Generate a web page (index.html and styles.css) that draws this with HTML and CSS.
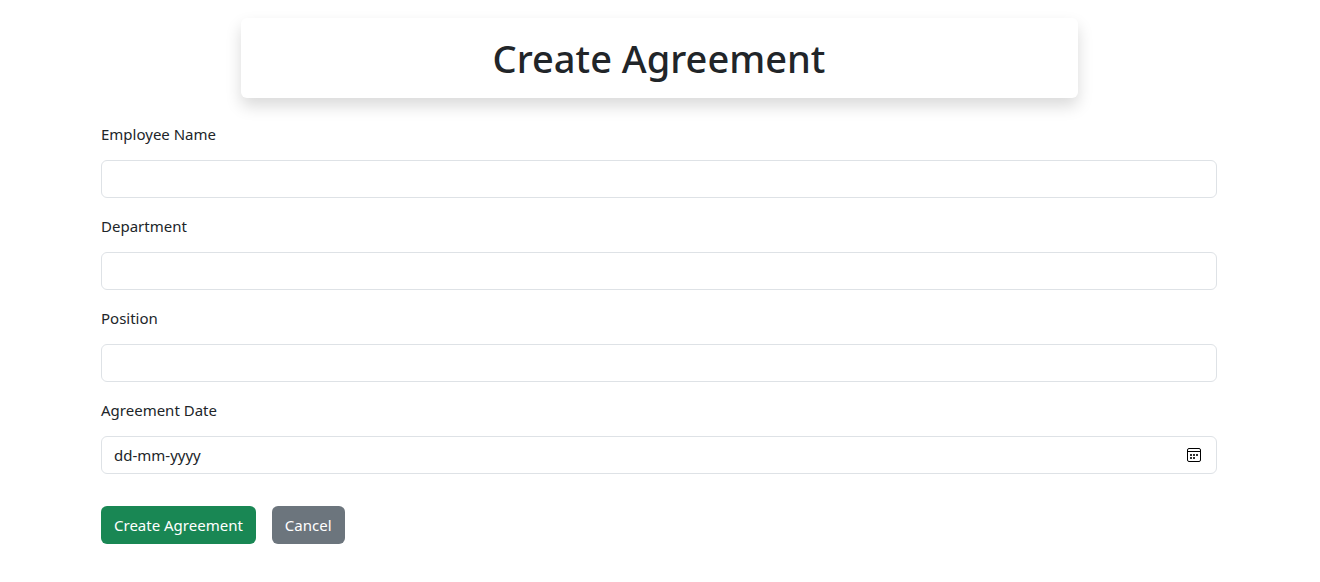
FILE: index.html
```html
<!DOCTYPE html>
<html lang="en">
<head>
<meta charset="utf-8">
<meta name="viewport" content="width=device-width, initial-scale=1">
<title>Create Agreement</title>
<link rel="stylesheet" href="styles.css">
</head>
<body>
<main class="container">
  <header class="banner"><h1 class="banner-title">Create Agreement</h1></header>
  <form class="form">
    <div class="field">
      <label class="label" for="name">Employee Name</label>
      <input class="control" id="name" type="text">
    </div>
    <div class="field">
      <label class="label" for="department">Department</label>
      <input class="control" id="department" type="text">
    </div>
    <div class="field">
      <label class="label" for="position">Position</label>
      <input class="control" id="position" type="text">
    </div>
    <div class="field">
      <label class="label" for="date">Agreement Date</label>
      <div class="control date-control">
        <input class="date-input" id="date" type="text" placeholder="dd-mm-yyyy">
        <button class="picker" type="button" aria-label="Choose date">
          <svg width="16" height="16" viewBox="0 0 16 16" fill="none" stroke="#000">
            <rect x="1.5" y="1.5" width="13" height="13" rx="1.5"/>
            <path d="M1.5 4.5h13"/>
            <path d="M4 8h2M7 8h2M10 8h2M4 11h2M7 11h2" stroke="#333" stroke-width="2"/>
          </svg>
        </button>
      </div>
    </div>
    <div class="actions">
      <button class="btn btn-success" type="submit">Create Agreement</button>
      <button class="btn btn-secondary" type="button">Cancel</button>
    </div>
  </form>
</main>
</body>
</html>
```
FILE: styles.css
```css
* { box-sizing: border-box; }
body {
  margin: 0;
  background: #fff;
  color: #212529;
  font: 15px/24px "Segoe UI", "Noto Sans", "Open Sans", sans-serif;
}
.container {
  max-width: 1140px;
  margin: 0 auto;
  padding: 18px 13px 0 11px;
}
.banner {
  width: 75%;
  margin: 0 auto 24px;
  padding: 16px;
  border-radius: 6px;
  box-shadow: 0 8px 16px rgba(0, 0, 0, 0.15);
  text-align: center;
}
.banner-title {
  margin: 0;
  font-size: 38px;
  line-height: 48px;
  font-weight: 500;
}
.form { display: flex; flex-direction: column; gap: 16px; }
.field { display: flex; flex-direction: column; gap: 14px; }
.label { align-self: flex-start; }
.control {
  width: 100%;
  height: 38px;
  padding: 6px 12px;
  border: 1px solid #dee2e6;
  border-radius: 6px;
  background: #fff;
  color: inherit;
  font: inherit;
}
.date-control { display: flex; align-items: center; }
.date-input {
  flex: 1;
  min-width: 0;
  padding: 0;
  border: 0;
  outline: 0;
  color: inherit;
  font: inherit;
}
.date-input::placeholder { color: #212529; opacity: 1; }
.picker { display: flex; margin: 0; padding: 2px; border: 0; background: none; }
.actions { display: flex; gap: 16px; padding-top: 16px; }
.btn {
  padding: 6px 12px;
  border: 1px solid transparent;
  border-radius: 6px;
  color: #fff;
  font: inherit;
}
.btn-success { background: #198754; }
.btn-secondary { background: #6c757d; }
```
